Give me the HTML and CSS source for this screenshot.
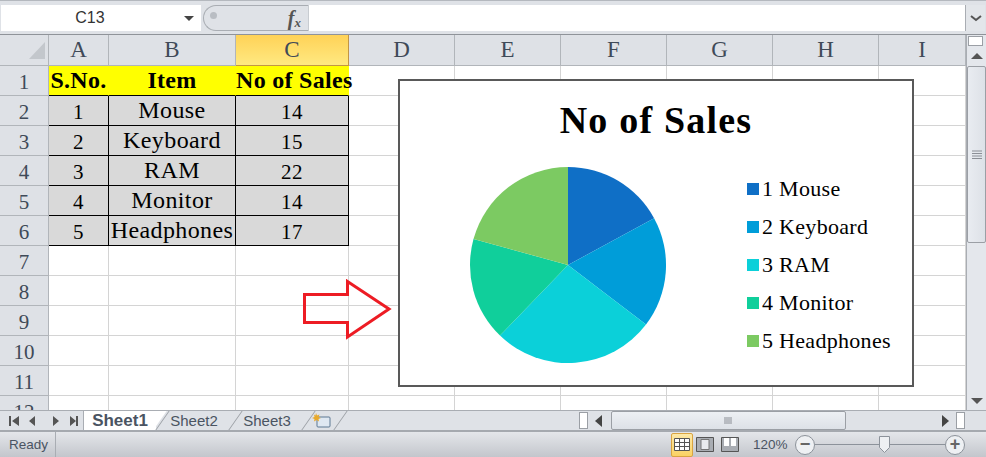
FILE: index.html
```html
<!DOCTYPE html>
<html lang="en">
<head>
    <meta charset="UTF-8">
    <title>No of Sales - Microsoft Excel</title>
    <link rel="stylesheet" href="styles.css">
</head>
<body>
<div id="app">

    <div class="formula-bar">
        <div class="name-box">
            <span class="name-value">C13</span>
            <span class="name-arrow"></span>
        </div>
        <div class="fx-pill">
            <span class="pill-dot"></span>
            <i class="fx">f<sub>x</sub></i>
        </div>
        <div class="formula-input"></div>
        <div class="formula-expand">
            <svg width="12" height="7" viewBox="0 0 12 7"><path d="M1 1l5 4 5-4" fill="none" stroke="#555" stroke-width="2"/></svg>
        </div>
    </div>

    <div class="middle">
        <div class="sheet">
            <table class="grid">
                <colgroup>
                    <col class="c-head"><col class="c-a"><col class="c-b"><col class="c-c">
                    <col class="c-std"><col class="c-std"><col class="c-std"><col class="c-std"><col class="c-std"><col class="c-last">
                </colgroup>
                <thead>
                    <tr>
                        <th class="corner"><svg width="32" height="30" viewBox="0 0 32 30"><path d="M13 24h16V7z" fill="#c3c7cc"/></svg></th>
                        <th>A</th><th>B</th><th class="active">C</th><th>D</th><th>E</th><th>F</th><th>G</th><th>H</th><th>I</th>
                    </tr>
                </thead>
                <tbody>
                    <tr class="title-row">
                        <th>1</th><td>S.No.</td><td>Item</td><td>No of Sales</td><td></td><td></td><td></td><td></td><td></td><td></td>
                    </tr>
                    <tr class="data-row">
                        <th>2</th><td class="num">1</td><td>Mouse</td><td class="num">14</td><td></td><td></td><td></td><td></td><td></td><td></td>
                    </tr>
                    <tr class="data-row">
                        <th>3</th><td class="num">2</td><td>Keyboard</td><td class="num">15</td><td></td><td></td><td></td><td></td><td></td><td></td>
                    </tr>
                    <tr class="data-row">
                        <th>4</th><td class="num">3</td><td>RAM</td><td class="num">22</td><td></td><td></td><td></td><td></td><td></td><td></td>
                    </tr>
                    <tr class="data-row">
                        <th>5</th><td class="num">4</td><td>Monitor</td><td class="num">14</td><td></td><td></td><td></td><td></td><td></td><td></td>
                    </tr>
                    <tr class="data-row">
                        <th>6</th><td class="num">5</td><td>Headphones</td><td class="num">17</td><td></td><td></td><td></td><td></td><td></td><td></td>
                    </tr>
                    <tr><th>7</th><td></td><td></td><td></td><td></td><td></td><td></td><td></td><td></td><td></td></tr>
                    <tr><th>8</th><td></td><td></td><td></td><td></td><td></td><td></td><td></td><td></td><td></td></tr>
                    <tr><th>9</th><td></td><td></td><td></td><td></td><td></td><td></td><td></td><td></td><td></td></tr>
                    <tr><th>10</th><td></td><td></td><td></td><td></td><td></td><td></td><td></td><td></td><td></td></tr>
                    <tr><th>11</th><td></td><td></td><td></td><td></td><td></td><td></td><td></td><td></td><td></td></tr>
                    <tr><th>12</th><td></td><td></td><td></td><td></td><td></td><td></td><td></td><td></td><td></td></tr>
                </tbody>
            </table>

            <svg class="arrow" width="90" height="62" viewBox="0 0 90 62">
                <path d="M2.500 15.500H45.500V2.500L87 30 45.500 58V43.500H2.500z" fill="none" stroke="#ed1c24" stroke-width="3"/>
            </svg>

            <div class="chart">
                <h2 class="chart-title">No of Sales</h2>
                <div class="chart-body">
                    <svg class="pie" width="200" height="200" viewBox="468 165 200 200">
                        <path d="M568 265V167A98 98 0 0 1 654.1 218.2z" fill="#0f6fc6"/>
                        <path d="M568 265L654.1 218.2A98 98 0 0 1 646 324.4z" fill="#009dd9"/>
                        <path d="M568 265L646 324.4A98 98 0 0 1 500 335.6z" fill="#0bd0d9"/>
                        <path d="M568 265L500 335.6A98 98 0 0 1 473.5 239z" fill="#10cf9b"/>
                        <path d="M568 265L473.5 239A98 98 0 0 1 568 167z" fill="#7cca62"/>
                    </svg>
                    <ul class="legend">
                        <li><span class="swatch s1"></span>1 Mouse</li>
                        <li><span class="swatch s2"></span>2 Keyboard</li>
                        <li><span class="swatch s3"></span>3 RAM</li>
                        <li><span class="swatch s4"></span>4 Monitor</li>
                        <li><span class="swatch s5"></span>5 Headphones</li>
                    </ul>
                </div>
            </div>
        </div>

        <div class="vscroll">
            <div class="v-split"></div>
            <div class="v-btn"><span class="tri-up"></span></div>
            <div class="v-thumb">
                <svg width="12" height="9" viewBox="0 0 12 9"><path d="M1 1h10M1 3.500h10M1 6h10M1 8.500h10" stroke="#8b8f96"/></svg>
            </div>
            <div class="v-track"></div>
            <div class="v-btn v-btn-down"><span class="tri-down"></span></div>
        </div>
    </div>

    <div class="tabs-bar">
        <div class="tab-nav">
            <svg width="70" height="12" viewBox="0 0 70 12">
                <path d="M1 1h2v10H1zM11 1v10L4 6zM27 1v10l-6-5zM45 1v10l6-5zM62 1v10l6-5zM68 1h2v10h-2z" fill="#555"/>
            </svg>
        </div>
        <div class="tab tab-on"><span class="tab-name">Sheet1</span></div>
        <div class="tab"><span class="tab-name">Sheet2</span></div>
        <div class="tab"><span class="tab-name">Sheet3</span></div>
        <div class="tab tab-new">
            <svg width="20" height="16" viewBox="0 0 20 16">
                <rect x="5" y="4" width="13" height="10" rx="1" fill="#dfe8f2" stroke="#5d7893"/>
                <path d="M4 0l1 2.500L7.500 1.500 6.500 4 9 5 6.500 6 7 8.500 4.500 7 2 8.500 2.500 6 0 5l2.500-1L2 1.500 3.500 2.500z" fill="#e8a92c"/>
            </svg>
        </div>
        <div class="tab-gap"></div>
        <div class="splitter"></div>
        <div class="hscroll">
            <span class="tri-left"></span>
            <div class="h-thumb">
                <svg width="9" height="7" viewBox="0 0 9 7"><path d="M1 0v7M3 0v7M5 0v7M7 0v7" stroke="#8b8f96"/></svg>
            </div>
            <span class="tri-right"></span>
        </div>
        <div class="splitter"></div>
        <div class="tabs-end"></div>
    </div>

    <div class="status-bar">
        <span class="ready">Ready</span>
        <div class="status-right">
            <div class="view-btn view-on">
                <svg width="16" height="13" viewBox="0 0 16 13"><path d="M.5.5h15v12H.5zM.5 4.500h15M.5 8.500h15M5.500.5v12M10.500.5v12" fill="#fff" stroke="#555"/></svg>
            </div>
            <div class="view-btn">
                <svg width="18" height="15" viewBox="0 0 18 15"><path d="M.5.5h17v14H.5z" fill="#a9adb3" stroke="#555"/><path d="M5 2.500h8v10H5z" fill="#e9ebee" stroke="#777"/></svg>
            </div>
            <div class="view-btn view-last">
                <svg width="18" height="15" viewBox="0 0 18 15"><path d="M.5.5h17v14H.5z" fill="#a9adb3" stroke="#555"/><path d="M3 1h5v8H3zM10 1h5v8h-5z" fill="#fff"/></svg>
            </div>
            <span class="zoom-level">120%</span>
            <span class="zoom-circle">−</span>
            <div class="zoom-track">
                <svg class="zoom-thumb" width="11" height="17" viewBox="0 0 11 17"><path d="M.5.5h10v11l-5 5-5-5z" fill="#eef0f3" stroke="#8c929a"/></svg>
            </div>
            <span class="zoom-circle">+</span>
        </div>
    </div>

</div>
</body>
</html>
```

FILE: styles.css
```css
* {
    box-sizing: border-box;
}
html, body {
    margin: 0;
    padding: 0;
}
body {
    width: 986px;
    height: 457px;
    overflow: hidden;
    font-family: "Liberation Serif", serif;
    background-color: #fff;
}
#app {
    display: flex;
    flex-direction: column;
    height: 457px;
}

/* formula bar */
.formula-bar {
    display: flex;
    height: 35px;
    flex: none;
    padding: 4px 1px 3px;
    background-color: #dfe2e7;
    border-top: 1px solid #b4b8be;
    border-bottom: 1px solid #8f9399;
}
.name-box {
    width: 200px;
    height: 26px;
    display: flex;
    align-items: center;
    background-color: #fff;
    font-family: "Liberation Sans", sans-serif;
    font-size: 16px;
    color: #333;
}
.name-value {
    width: 178px;
    text-align: center;
}
.name-arrow {
    margin-left: 5px;
    border-left: 5px solid transparent;
    border-right: 5px solid transparent;
    border-top: 5px solid #444;
}
.fx-pill {
    width: 105px;
    height: 26px;
    margin-left: 2px;
    display: flex;
    align-items: center;
    justify-content: space-between;
    padding: 0 7px 0 6px;
    background-color: #dfe2e7;
    border: 1px solid #a9adb3;
    border-width: 1px 0 1px 1px;
    border-radius: 13px 0 0 13px;
}
.pill-dot {
    width: 7px;
    height: 7px;
    margin-top: -5px;
    border-radius: 50%;
    background-color: #b9bdc3;
}
.fx {
    font-size: 20px;
    font-weight: bold;
    color: #555;
    line-height: 1;
}
.fx sub {
    font-size: 13px;
    vertical-align: -2px;
}
.formula-input {
    flex: 1;
    height: 26px;
    background-color: #fff;
    border-left: 1px solid #c8ccd1;
}
.formula-expand {
    width: 20px;
    height: 26px;
    display: flex;
    align-items: center;
    justify-content: center;
    background-color: #e3e6ea;
    border-left: 1px solid #a9adb3;
}

/* sheet */
.middle {
    display: flex;
    flex: 1;
    min-height: 0;
}
.sheet {
    position: relative;
    flex: 1;
    overflow: hidden;
}
.grid {
    table-layout: fixed;
    border-collapse: separate;
    border-spacing: 0;
    width: 966px;
}
.c-head { width: 49px; }
.c-a { width: 60px; }
.c-b { width: 127px; }
.c-c { width: 113px; }
.c-std { width: 106px; }
.c-last { width: 87px; }
.grid th, .grid td {
    height: 30px;
    padding: 0;
    text-align: center;
    white-space: nowrap;
    font-weight: normal;
    border-right: 1px solid #d4d4d4;
    border-bottom: 1px solid #d4d4d4;
}
.grid th {
    background-color: #dee1e6;
    border-right-color: #b1b5ba;
    border-bottom-color: #b1b5ba;
    color: #3f4a58;
    font-size: 23px;
}
.grid tbody th {
    font-size: 21px;
    padding-top: 3px;
}
.grid .corner {
    vertical-align: bottom;
    text-align: right;
}
.corner svg {
    display: block;
    margin-left: auto;
}
.grid .active {
    background: linear-gradient(#ffd257, #ffe981);
    border-right-color: #c29545;
    border-bottom-color: #c29545;
}
.grid td {
    color: #000;
}
.title-row td {
    font-size: 24px;
    letter-spacing: .3px;
    font-weight: bold;
    overflow: visible;
}
.title-row td:nth-child(-n+4) {
    background-color: #ff0;
    border-right-color: #ff0;
    border-bottom-color: #000;
}
.data-row td {
    font-size: 24px;
    letter-spacing: .4px;
}
.data-row td:nth-child(-n+4) {
    background-color: #d9d9d9;
    border-right-color: #000;
    border-bottom-color: #000;
}
.data-row td.num {
    font-size: 21px;
    padding-top: 3px;
}

/* arrow and chart lie over the cells */
.arrow {
    position: absolute;
    left: 302px;
    top: 244px;
}
.chart {
    position: absolute;
    left: 398px;
    top: 44px;
    width: 516px;
    height: 308px;
    display: flex;
    flex-direction: column;
    background-color: #fff;
    border: 2px solid #595959;
}
.chart-title {
    margin: 16px 0 0;
    height: 52px;
    text-align: center;
    font-size: 38px;
    letter-spacing: 1.2px;
    line-height: 46px;
    color: #000;
}
.chart-body {
    display: flex;
    padding: 16px 0 0 68px;
}
.pie {
    display: block;
}
.legend {
    list-style: none;
    margin: 0;
    padding: 5px 0 0 79px;
}
.legend li {
    display: flex;
    align-items: center;
    height: 38px;
    font-size: 22px;
    letter-spacing: .3px;
    white-space: nowrap;
}
.swatch {
    width: 12px;
    height: 12px;
    margin-right: 3px;
}
.s1 { background-color: #0f6fc6; }
.s2 { background-color: #009dd9; }
.s3 { background-color: #0bd0d9; }
.s4 { background-color: #10cf9b; }
.s5 { background-color: #7cca62; }

/* vertical scrollbar */
.vscroll {
    width: 20px;
    flex: none;
    display: flex;
    flex-direction: column;
    background-color: #e4e7ec;
    border-left: 1px solid #a9adb3;
}
.v-split {
    height: 10px;
    margin: 1px 3px 0 1px;
    background-color: #fff;
    border: 1px solid #9b9fa5;
}
.v-btn {
    height: 20px;
    display: flex;
    align-items: center;
    justify-content: center;
}
.tri-up {
    border-left: 6px solid transparent;
    border-right: 6px solid transparent;
    border-bottom: 6px solid #555;
}
.tri-down {
    border-left: 6px solid transparent;
    border-right: 6px solid transparent;
    border-top: 6px solid #555;
}
.v-thumb {
    height: 177px;
    flex: none;
    display: flex;
    align-items: center;
    justify-content: center;
    background: linear-gradient(90deg, #e9ecf1, #dde1e7);
    border: 1px solid #9b9fa5;
    border-radius: 2px;
}
.v-track {
    flex: 1;
}
.v-btn-down {
    height: 18px;
}

/* sheet tabs and horizontal scrollbar */
.tabs-bar {
    display: flex;
    align-items: stretch;
    height: 22px;
    flex: none;
    background-color: #dfe2e7;
    border-top: 1px solid #a9adb3;
    border-bottom: 2px solid #a5a9af;
    color: #4a5462;
    font-family: "Liberation Sans", sans-serif;
    font-size: 15px;
}
.tab-nav {
    width: 84px;
    display: flex;
    align-items: center;
    padding-left: 8px;
    border-right: 1px solid #a9adb3;
}
.tab {
    width: 73px;
    line-height: 19px;
    text-align: center;
    padding-left: 3px;
    position: relative;
}
.tab-name {
    position: relative;
    z-index: 1;
}
.tab::before {
    content: "";
    position: absolute;
    left: 6px;
    top: 0;
    bottom: 0;
    width: 1px;
    background-color: #9b9fa5;
    transform: skewX(-35deg);
}
.tab-on {
    width: 72px;
    padding-left: 0;
    background-color: #fff;
    font-size: 17px;
    font-weight: bold;
}
.tab-on::before {
    display: none;
}
.tab-on::after {
    content: "";
    position: absolute;
    left: 62px;
    top: 0;
    bottom: 0;
    width: 14px;
    background-color: #fff;
    transform: skewX(-35deg);
}
.tab-new {
    width: 36px;
    display: flex;
    align-items: center;
    justify-content: center;
}
.tab-new::after {
    content: "";
    position: absolute;
    left: 38px;
    top: 0;
    bottom: 0;
    width: 1px;
    background-color: #9b9fa5;
    transform: skewX(-35deg);
}
.tab-gap {
    flex: 1;
}
.splitter {
    width: 9px;
    margin: 1px 0;
    background-color: #fff;
    border: 1px solid #9b9fa5;
}
.hscroll {
    width: 368px;
    display: flex;
    align-items: center;
    padding: 0 7px;
}
.h-thumb {
    width: 235px;
    height: 19px;
    margin: 0 auto 0 9px;
    display: flex;
    align-items: center;
    justify-content: center;
    background: linear-gradient(#edf0f4, #dde1e7);
    border: 1px solid #9b9fa5;
    border-radius: 2px;
}
.tri-left {
    border-top: 6px solid transparent;
    border-bottom: 6px solid transparent;
    border-right: 7px solid #444;
}
.tri-right {
    border-top: 6px solid transparent;
    border-bottom: 6px solid transparent;
    border-left: 7px solid #444;
}
.tabs-end {
    width: 21px;
}

/* status bar */
.status-bar {
    height: 25px;
    flex: none;
    display: flex;
    align-items: center;
    justify-content: space-between;
    background: linear-gradient(#e4e6ea, #c3c6cc);
    font-family: "Liberation Sans", sans-serif;
    font-size: 13.5px;
    color: #4a5462;
}
.ready {
    height: 100%;
    width: 56px;
    padding-left: 9px;
    line-height: 25px;
    border-right: 1px solid #a9adb3;
}
.status-right {
    display: flex;
    align-items: center;
    height: 100%;
    padding-right: 21px;
}
.view-btn {
    width: 18px;
    height: 24px;
    margin-right: 7px;
    display: flex;
    align-items: center;
    justify-content: center;
}
.view-on {
    width: 22px;
    margin-right: 3px;
    background: linear-gradient(#fde9a8, #fbd264);
    border: 1px solid #d9a441;
    border-radius: 2px;
}
.view-last {
    margin-right: 0;
}
.zoom-level {
    width: 34px;
    margin: 0 8px 0 14px;
    font-size: 13.5px;
    white-space: nowrap;
}
.zoom-circle {
    width: 20px;
    height: 20px;
    display: flex;
    align-items: center;
    justify-content: center;
    border: 1px solid #8c929a;
    border-radius: 50%;
    background-color: #eef0f3;
    font-size: 18px;
    font-weight: bold;
    color: #666;
}
.zoom-track {
    width: 130px;
    height: 17px;
    position: relative;
    background: linear-gradient(#8c929a, #8c929a) center / 100% 1px no-repeat;
}
.zoom-thumb {
    position: absolute;
    left: 64px;
    top: 0;
}
```
